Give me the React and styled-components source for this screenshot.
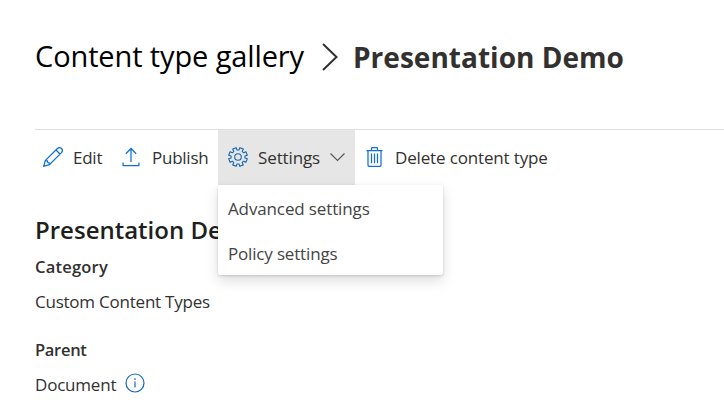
import React from 'react';
import styled, { createGlobalStyle } from 'styled-components';

const GlobalStyle = createGlobalStyle`
  *, *::before, *::after { box-sizing: border-box; }
  body {
    margin: 0;
    background: #fff;
    color: #323130;
    font-family: 'Segoe UI', 'Open Sans', 'Noto Sans', sans-serif;
  }
  h1, h2, h3, p, ul { margin: 0; padding: 0; }
`;

const Page = styled.main`
  width: 724px;
  height: 414px;
  padding-left: 35px;
  overflow: hidden;
  white-space: nowrap;
`;

const Breadcrumb = styled.nav`
  display: flex;
  height: 129px;
  padding-top: 36px;
`;

const Parent = styled.a`
  width: 287px;
  font-size: 29px;
  line-height: 40px;
  letter-spacing: -0.12px;
  color: #000;
`;

const Separator = styled.svg`
  width: 17px;
  height: 28px;
  margin: 7px 14px 0 0;
  flex: none;
`;

const Current = styled.h1`
  font-size: 28px;
  line-height: 43px;
  font-weight: 700;
  letter-spacing: 0.02px;
  color: #323130;
`;

const CommandBar = styled.div`
  display: flex;
  height: 56px;
  border-top: 1px solid #e1dfdd;
`;

const CommandSlot = styled.div`
  position: relative;
  width: ${(p) => p.$width}px;
  flex: none;
`;

const Command = styled.button`
  display: flex;
  align-items: center;
  gap: ${(p) => p.$gap || 10}px;
  width: 100%;
  height: 55px;
  padding: 0 0 0 ${(p) => p.$inset || 0}px;
  border: 0;
  background: ${(p) => (p.$active ? '#e6e6e6' : 'transparent')};
  color: #323130;
  font-family: inherit;
`;

const Label = styled.span`
  font-size: 17px;
  line-height: 24px;
  letter-spacing: ${(p) => p.$track || 0}px;
  width: ${(p) => p.$width}px;
  flex: none;
  text-align: left;
`;

const Icon = styled.svg`
  width: ${(p) => p.$w || 20}px;
  height: 20px;
  margin-bottom: 1px;
  flex: none;
  fill: none;
  stroke: ${(p) => p.$color || '#1071d3'};
  stroke-width: 1.25;
`;

const Menu = styled.ul`
  position: absolute;
  top: 55px;
  left: 0;
  z-index: 1;
  width: 225px;
  height: 90px;
  list-style: none;
  background: #fff;
  border-radius: 2px;
  box-shadow: 0 6px 14px rgba(0, 0, 0, 0.13), 0 1px 3px rgba(0, 0, 0, 0.16);
`;

const MenuItem = styled.li`
  height: 45px;
  padding: 1px 10px 0;
  font-size: 17px;
  line-height: 45px;
  letter-spacing: ${(p) => p.$track}px;
  color: #444;
`;

const Details = styled.section`
  padding-top: 28px;
`;

const Title = styled.h2`
  font-size: 24px;
  line-height: 34px;
  font-weight: 600;
  letter-spacing: 0;
  color: #201f1e;
`;

const Field = styled.div`
  margin-top: ${(p) => p.$top}px;
`;

const FieldName = styled.h3`
  font-size: 16.5px;
  line-height: 24px;
  font-weight: 600;
  letter-spacing: ${(p) => p.$track}px;
`;

const FieldValue = styled.p`
  display: flex;
  margin-top: 11px;
  font-size: 17px;
  line-height: 24px;
  letter-spacing: ${(p) => p.$track}px;
`;

const InfoIcon = styled.svg`
  width: 20px;
  height: 20px;
  margin-left: 9px;
  flex: none;
`;

const gearPoints = (() => {
  const points = [];
  for (let i = 0; i < 8; i += 1) {
    const middle = (i * Math.PI) / 4 + Math.PI / 8;
    [[-0.25, 7], [-0.2, 9.5], [0.2, 9.5], [0.25, 7]].forEach(([offset, radius]) => {
      points.push(
        `${(10 + radius * Math.cos(middle + offset)).toFixed(2)},${(10 + radius * Math.sin(middle + offset)).toFixed(2)}`
      );
    });
  }
  return points.join(' ');
})();

const PencilIcon = () => (
  <Icon viewBox="0 0 20 20">
    <path d="M.7 19.3 2.3 13.6 14.4 1.5a2.8 2.8 0 0 1 4.1 4.1L6.4 17.7ZM13 3l4 4M2.3 13.6l2 .3.5 1.6 1.4.5.2 1.7" />
  </Icon>
);

const UploadIcon = () => (
  <Icon viewBox="0 0 18 20" $w={18}>
    <path d="M9 15V1.5M3.8 6.8 9 1.5l5.2 5.3M1.1 15.5v3h15.8v-3" />
  </Icon>
);

const GearIcon = () => (
  <Icon viewBox="0 0 20 20" $color="#1766ac">
    <polygon points={gearPoints} strokeWidth="1.1" strokeLinejoin="round" />
    <circle cx="10" cy="10" r="3.3" strokeWidth="1.1" />
  </Icon>
);

const ChevronIcon = () => (
  <Icon viewBox="0 0 15 20" $w={15} $color="#555">
    <path d="m.5 6.5 7 7 7-7" strokeWidth="1.1" />
  </Icon>
);

const TrashIcon = () => (
  <Icon viewBox="0 0 17 20" $w={17}>
    <path d="M.5 3.5h16M5.5 3.5v-2q0-1 1-1h4q1 0 1 1v2M2 3.5V18q0 1.4 1.4 1.4h10.2Q15 19.4 15 18V3.5M5.5 6.5v9.8M8.5 6.5v9.8M11.5 6.5v9.8" />
  </Icon>
);

export default function App() {
  return (
    <>
      <GlobalStyle />
      <Page>
        <Breadcrumb>
          <Parent>Content type gallery</Parent>
          <Separator viewBox="0 0 17 28" fill="none" stroke="#323130" strokeWidth="2">
            <path d="m1 1 13.5 13L1 27" />
          </Separator>
          <Current>Presentation Demo</Current>
        </Breadcrumb>
        <CommandBar>
          <CommandSlot $width={79}>
            <Command $inset={8}>
              <PencilIcon />
              <Label $width={35} $track={-0.25}>Edit</Label>
            </Command>
          </CommandSlot>
          <CommandSlot $width={104}>
            <Command $inset={8} $gap={12}>
              <UploadIcon />
              <Label $width={60} $track={-0.25}>Publish</Label>
            </Command>
          </CommandSlot>
          <CommandSlot $width={137}>
            <Command $inset={10} $active>
              <GearIcon />
              <Label $width={62} $track={-0.12}>Settings</Label>
              <ChevronIcon />
            </Command>
            <Menu>
              <MenuItem $track={-0.13}>Advanced settings</MenuItem>
              <MenuItem $track={-0.17}>Policy settings</MenuItem>
            </Menu>
          </CommandSlot>
          <CommandSlot $width={200}>
            <Command $inset={11} $gap={12}>
              <TrashIcon />
              <Label $width={160} $track={-0.15}>Delete content type</Label>
            </Command>
          </CommandSlot>
        </CommandBar>
        <Details>
          <Title>Presentation Demo</Title>
          <Field $top={8}>
            <FieldName $track={0.22}>Category</FieldName>
            <FieldValue $track={-0.23}>Custom Content Types</FieldValue>
          </Field>
          <Field $top={24}>
            <FieldName $track={-0.3}>Parent</FieldName>
            <FieldValue $track={-0.2}>
              Document
              <InfoIcon viewBox="0 0 20 20" fill="none" stroke="#1766c4" strokeWidth="1.2">
                <circle cx="10" cy="10" r="9" />
                <path d="M10 8.5v6M10 5.3v1.6" />
              </InfoIcon>
            </FieldValue>
          </Field>
        </Details>
      </Page>
    </>
  );
}
